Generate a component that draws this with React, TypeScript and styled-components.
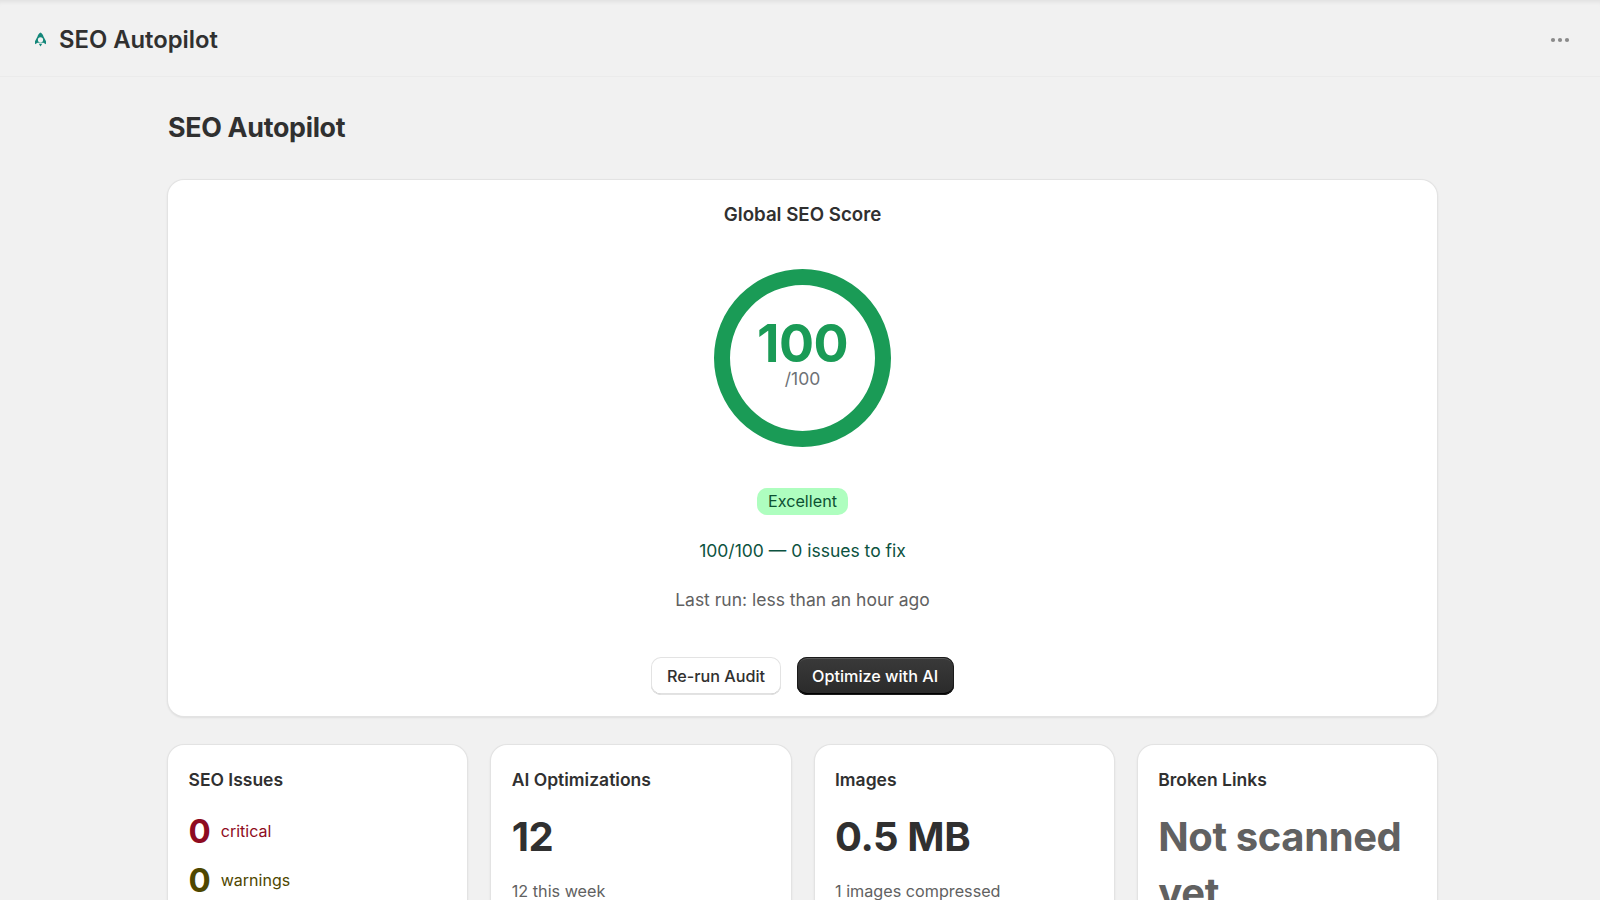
import styled, { createGlobalStyle } from "styled-components";

const GlobalStyle = createGlobalStyle`
  html, body {
    margin: 0;
    height: 100%;
    overflow: hidden;
    background: #f1f1f1;
    font-family: Inter, "Liberation Sans", sans-serif;
    color: #303030;
  }
  * { box-sizing: border-box; }
`;

const Shell = styled.div`
  height: 900px;
  overflow: hidden;
  box-shadow: inset 0 5px 4px -3px rgba(0, 0, 0, 0.07);
`;

const TopBar = styled.header`
  display: flex;
  align-items: center;
  justify-content: space-between;
  height: 77px;
  padding: 3px 30px 0 34px;
  border-bottom: 1px solid #ebebeb;
`;

const Brand = styled.div`
  display: flex;
  align-items: center;
  gap: 12px;
`;

const BrandName = styled.span`
  font-size: 23.8px;
  font-weight: 570;
`;

const Main = styled.main`
  padding: 0 163px 0 168px;
`;

const PageTitle = styled.h1`
  margin: 0;
  padding: 27px 0 30px;
  font-size: 26.8px;
  line-height: 46px;
  font-weight: 650;
  letter-spacing: -0.3px;
`;

const Card = styled.section`
  background: #fff;
  border-radius: 16px;
  box-shadow: 0 0 0 1px #e3e3e3, 0 1px 2px 1px rgba(0, 0, 0, 0.08);
`;

const ScoreCard = styled(Card)`
  display: flex;
  flex-direction: column;
  align-items: center;
  height: 536px;
  padding-top: 21px;
`;

const ScoreTitle = styled.h2`
  margin: 0;
  font-size: 18.7px;
  line-height: 28px;
  font-weight: 600;
`;

const Ring = styled.div`
  display: flex;
  flex-direction: column;
  align-items: center;
  justify-content: center;
  width: 177px;
  height: 178px;
  margin-top: 40px;
  padding-bottom: 9px;
  border: 16px solid #1a9b56;
  border-radius: 50%;
`;

const RingValue = styled.div`
  font-size: 52px;
  line-height: 50px;
  font-weight: 700;
  letter-spacing: -0.5px;
  color: #1a9b56;
`;

const RingMax = styled.div`
  font-size: 17.5px;
  line-height: 20px;
  color: #6d7175;
`;

const Badge = styled.span`
  margin-top: 41px;
  padding: 0 11px;
  height: 27px;
  line-height: 27px;
  border-radius: 10px;
  background: #aefebf;
  color: #0c5132;
  font-size: 16.2px;
`;

const Summary = styled.p`
  margin: 24px 0 0;
  font-size: 17.5px;
  line-height: 24px;
  color: #0c5240;
`;

const LastRun = styled.p`
  margin: 25px 0 0;
  font-size: 17.5px;
  line-height: 24px;
  color: #616161;
`;

const Actions = styled.div`
  display: flex;
  gap: 16px;
  margin-top: 45px;
`;

const Button = styled.button<{ $primary?: boolean }>`
  height: 38px;
  padding: 0 15.5px;
  border: 0;
  border-radius: 10px;
  font-family: inherit;
  font-size: 16.2px;
  font-weight: 500;
  color: ${(p) => (p.$primary ? "#fff" : "#303030")};
  background: ${(p) =>
    p.$primary ? "linear-gradient(#3a3a3a, #2a2a2a)" : "#fff"};
  box-shadow: ${(p) =>
    p.$primary
      ? "inset 0 0 0 1px #1a1a1a, inset 0 -2px 0 #000, inset 0 2px 0 rgba(255,255,255,0.15)"
      : "inset 0 0 0 1px #e3e3e3, inset 0 -1.5px 0 #c4c4c4"};
`;

const StatGrid = styled.div`
  display: grid;
  grid-template-columns: repeat(4, 1fr);
  gap: 24px;
  margin-top: 29px;
`;

const StatCard = styled(Card)`
  height: 240px;
  padding: 20px 20px 20px 20.5px;
  overflow: hidden;
`;

const StatTitle = styled.h3`
  margin: 0 0 14px;
  font-size: 17.5px;
  line-height: 30px;
  font-weight: 600;
`;

const StatValue = styled.div<{ $muted?: boolean }>`
  font-size: 40px;
  line-height: 56px;
  font-weight: 700;
  letter-spacing: -0.4px;
  color: ${(p) => (p.$muted ? "#616161" : "#303030")};
`;

const StatNote = styled.p`
  margin: 14px 0 0;
  font-size: 16.2px;
  line-height: 24px;
  color: #616161;
`;

const IssueRow = styled.div<{ $tone: string }>`
  display: flex;
  align-items: center;
  gap: 10px;
  height: 49px;
  color: ${(p) => p.$tone};
  margin-top: -3px;
  margin-bottom: 3px;
`;

const IssueCount = styled.span`
  font-size: 33px;
  font-weight: 700;
`;

const IssueLabel = styled.span`
  font-size: 16px;
`;

const RocketIcon = () => (
  <svg width="13" height="15" viewBox="0 0 13 15" fill="#14877a">
    <path
      fillRule="evenodd"
      d="M6.5 0.5C8 1.5 9.2 3 9.6 4.8L12 9.2V12.2L9.4 10.8H3.6L1 12.2V9.2L3.4 4.8C3.8 3 5 1.5 6.5 0.5ZM6.5 5.2A2.6 2.6 0 1 0 6.5 10.4 2.6 2.6 0 0 0 6.5 5.2Z"
    />
    <path d="M4.8 11.8H8.2L6.5 14.6Z" />
  </svg>
);

const DotsIcon = () => (
  <svg width="20" height="6" viewBox="0 0 20 6" fill="#8a8a8a">
    <circle cx="3" cy="3" r="2.1" />
    <circle cx="10" cy="3" r="2.1" />
    <circle cx="17" cy="3" r="2.1" />
  </svg>
);

export default function App() {
  return (
    <Shell>
      <GlobalStyle />
      <TopBar>
        <Brand>
          <RocketIcon />
          <BrandName>SEO Autopilot</BrandName>
        </Brand>
        <DotsIcon />
      </TopBar>
      <Main>
        <PageTitle>SEO Autopilot</PageTitle>
        <ScoreCard>
          <ScoreTitle>Global SEO Score</ScoreTitle>
          <Ring>
            <RingValue>100</RingValue>
            <RingMax>/100</RingMax>
          </Ring>
          <Badge>Excellent</Badge>
          <Summary>100/100 — 0 issues to fix</Summary>
          <LastRun>Last run: less than an hour ago</LastRun>
          <Actions>
            <Button>Re-run Audit</Button>
            <Button $primary>Optimize with AI</Button>
          </Actions>
        </ScoreCard>
        <StatGrid>
          <StatCard>
            <StatTitle>SEO Issues</StatTitle>
            <IssueRow $tone="#8e0b21">
              <IssueCount>0</IssueCount>
              <IssueLabel>critical</IssueLabel>
            </IssueRow>
            <IssueRow $tone="#4f4700">
              <IssueCount>0</IssueCount>
              <IssueLabel>warnings</IssueLabel>
            </IssueRow>
          </StatCard>
          <StatCard>
            <StatTitle>AI Optimizations</StatTitle>
            <StatValue>12</StatValue>
            <StatNote>12 this week</StatNote>
          </StatCard>
          <StatCard>
            <StatTitle>Images</StatTitle>
            <StatValue>0.5 MB</StatValue>
            <StatNote>1 images compressed</StatNote>
          </StatCard>
          <StatCard>
            <StatTitle>Broken Links</StatTitle>
            <StatValue $muted>Not scanned yet</StatValue>
          </StatCard>
        </StatGrid>
      </Main>
    </Shell>
  );
}
